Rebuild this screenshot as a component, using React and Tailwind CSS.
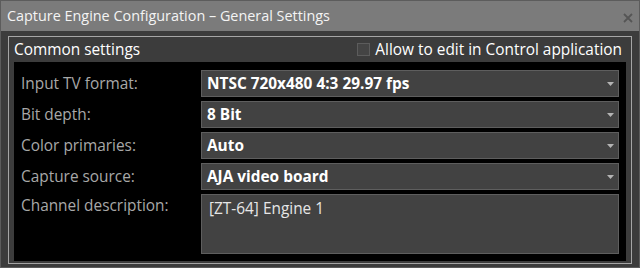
import React from 'react';

const fields = [
  { label: 'Input TV format:', value: 'NTSC 720x480 4:3 29.97 fps' },
  { label: 'Bit depth:', value: '8 Bit' },
  { label: 'Color primaries:', value: 'Auto' },
  { label: 'Capture source:', value: 'AJA video board' },
];

function ComboBox({ value }) {
  return (
    <div className="h-[27px] bg-[#424242] border border-[#5e5e5e] flex items-center pl-[5px] pr-[4px]">
      <span className="flex-1 text-white font-bold text-[15.4px] leading-none">{value}</span>
      <svg width="7" height="5" viewBox="0 0 7 5" className="mt-[1px]">
        <polygon points="0,0 7,0 3.5,4" fill="#b4b4b4" />
      </svg>
    </div>
  );
}

export default function App() {
  return (
    <div
      className="w-[640px] h-[268px] bg-[#3c3c3c] border border-[#5c5c5c] flex flex-col select-none"
      style={{ fontFamily: '"Open Sans", "Noto Sans", sans-serif' }}
    >
      {/* title bar */}
      <div className="h-[30px] bg-[#7b7b7b] flex items-center pl-[6px] pr-[6px] shrink-0">
        <span className="flex-1 text-[14.4px] text-[#f4f4f4] leading-none">
          Capture Engine Configuration – General Settings
        </span>
        <svg width="10" height="10" viewBox="0 0 10 10" className="mt-[3px]">
          <path d="M1 1 L9 9 M9 1 L1 9" stroke="#555555" strokeWidth="1.8" />
        </svg>
      </div>

      <div className="flex-1 pl-[7px] pr-[7px] pt-[5px] pb-[3px]">
        <div className="h-full border border-[#a6a6a6] flex flex-col px-[5px] pb-[2px]">
          <div className="h-[25px] flex items-center justify-between shrink-0 pr-[4px]">
            <span className="text-[15.4px] text-white leading-none">Common settings</span>
            <label className="flex items-center gap-[5px]">
              <span className="w-[13px] h-[13px] border border-[#5c5c5c] bg-[#444444]" />
              <span className="text-[15.4px] text-white leading-none">Allow to edit in Control application</span>
            </label>
          </div>

          <div className="flex-1 bg-black px-[7px] pt-[8px] pb-[7px] grid grid-cols-[180px_1fr] auto-rows-min gap-y-[4px]">
            {fields.map(f => (
              <React.Fragment key={f.label}>
                <div className="text-[15.4px] text-[#a8a8a8] flex items-center leading-none">{f.label}</div>
                <ComboBox value={f.value} />
              </React.Fragment>
            ))}
            <div className="text-[15.4px] text-[#a8a8a8] leading-none pt-[4px]">Channel description:</div>
            <div className="h-[60px] bg-[#424242] border border-[#5e5e5e] px-[7px] pt-[6px] text-[15.4px] text-[#e6e6e6] leading-none">
              [ZT-64] Engine 1
            </div>
          </div>
        </div>
      </div>
    </div>
  );
}
